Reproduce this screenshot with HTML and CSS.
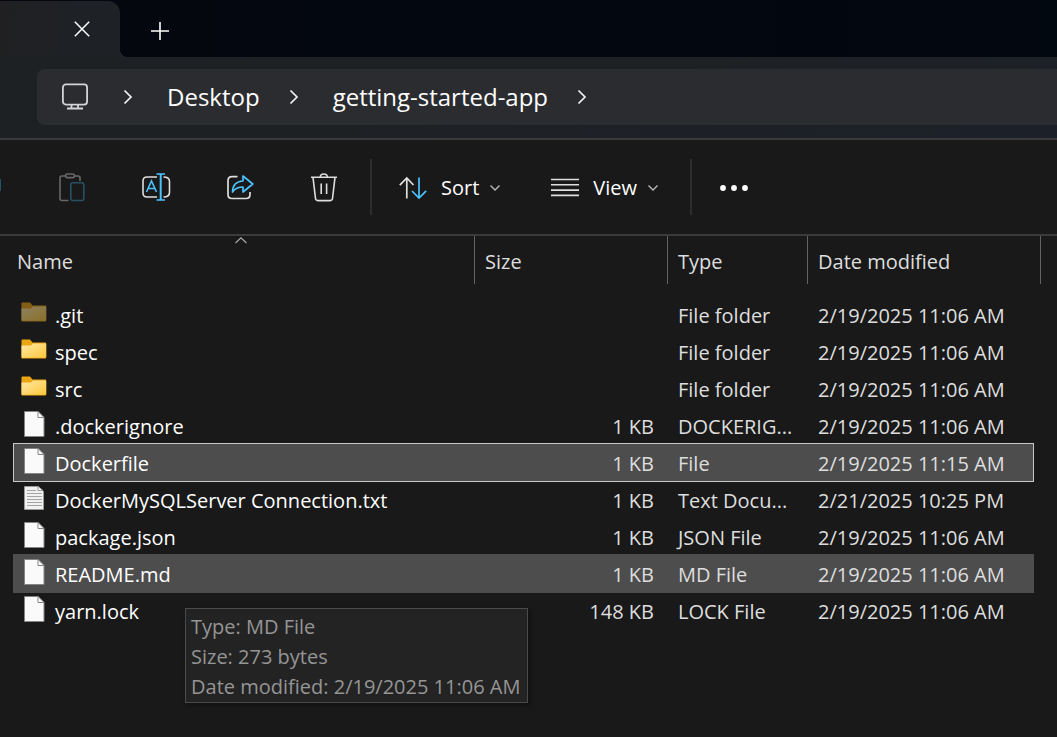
FILE: index.html
```html
<!DOCTYPE html>
<html lang="en">
<head>
<meta charset="utf-8">
<title>getting-started-app</title>
<link rel="stylesheet" href="styles.css">
</head>
<body>
<svg class="defs" aria-hidden="true">
  <defs>
    <linearGradient id="front" x1="0" y1="0" x2="1" y2="1"><stop offset="0" stop-color="#ffe8a6"/><stop offset="1" stop-color="#fdc73a"/></linearGradient>
    <symbol id="folder" viewBox="0.500 1 26 28">
      <path d="M1 5.500q0-1 1-1h7.500l2.500 3H25q.7 0 .7 1V22.500q0 1-1 1H1.500q-.5 0-.5-1z" fill="#eba512"/>
      <path d="M1 10.500h8.500q1 0 1.500-.6l1.500-1.400H25q.7 0 .7 1V22q0 .8-.8.8H1.600q-.6 0-.6-.8z" fill="url(#front)"/>
    </symbol>
    <symbol id="file" viewBox="0 0 26 28">
      <path d="M3.500 1.500H17L23 7.500V26.500H3.500z" fill="#fafafa" stroke="#858585"/>
      <path d="M17 1.500V7.500H23z" fill="#fff" stroke="#858585"/>
    </symbol>
    <symbol id="text" viewBox="0 0 26 28">
      <path d="M3.500 2.500H17L22.500 7.500V25.500H3.500z" fill="#f1f1f1" stroke="#999"/>
      <path d="M17 2.500V6.500H22z" fill="#fff" stroke="#999"/>
      <path d="M6 6.500H15M6 9.500H21M6 12.500H21M6 15.500H21M6 18.500H21M6 21.500H21" stroke="#a4a4a4" stroke-width="1"/>
    </symbol>
    <symbol id="right" viewBox="0 0 10 16"><path d="M1.500 1.500 8 8 1.500 14.500" fill="none" stroke="#f2f2f2" stroke-width="1.700"/></symbol>
    <symbol id="down" viewBox="0 0 12 8"><path d="M1.500 1.500 6 6 10.500 1.500" fill="none" stroke="#bdbdbd" stroke-width="1.300"/></symbol>
  </defs>
</svg>

<header class="titlebar">
  <div class="tab">
    <button class="icon-button" aria-label="Close tab">
      <svg width="16" height="16" viewBox="0 0 16 16"><path d="M.800.800 15.200 15.200M15.200.800.800 15.200" stroke="#fff" stroke-width="1.500"/></svg>
    </button>
  </div>
  <button class="icon-button new-tab" aria-label="New tab">
    <svg width="18" height="18" viewBox="0 0 18 18"><path d="M9 0V18M0 9H18" stroke="#fff" stroke-width="1.600"/></svg>
  </button>
</header>

<nav class="address" aria-label="Address">
  <div class="crumbs">
    <button class="icon-button device" aria-label="This PC">
      <svg width="28" height="28" viewBox="0 0 28 28" fill="none" stroke="#d2d4d6" stroke-width="1.800"><rect x="1.900" y="1.400" width="24.200" height="20.200" rx="3"/><path d="M10.500 21.500v4M17 21.500v4M6 25.500h16"/></svg>
    </button>
    <svg class="chevron" width="10" height="16"><use href="#right"/></svg>
    <a class="crumb" href="#">Desktop</a>
    <svg class="chevron" width="10" height="16"><use href="#right"/></svg>
    <a class="crumb" href="#">getting-started-app</a>
    <svg class="chevron" width="10" height="16"><use href="#right"/></svg>
  </div>
</nav>

<div class="toolbar" role="toolbar" aria-label="Commands">
  <button class="copy" aria-label="Copy"></button>
  <button class="tool" aria-label="Paste" disabled>
    <svg width="32" height="32" viewBox="0 0 32 32" fill="none" stroke-width="1.600"><path d="M12.500 28.500H6Q4 28.500 4 26.500V6Q4 4 6 4H9M19 4h3q2 0 2 2v3" stroke="#686868"/><rect x="9.500" y="2" width="9" height="3.600" rx="1.800" stroke="#686868"/><rect x="14.800" y="10.700" width="13" height="17.800" rx="2" stroke="#285064"/></svg>
  </button>
  <button class="tool" aria-label="Rename">
    <svg width="32" height="32" viewBox="0 0 32 32" fill="none" stroke-width="1.600"><path d="M17 5H7Q3 5 3 9v12q0 4 4 4h10M23.500 5Q29.500 5 29.500 9.500V20.500Q29.500 25 23.500 25" stroke="#dedede"/><path d="M6.500 20 11.500 9 16.500 20M8 16.500h7M16.500 2h8.500M16.500 28h8.500" stroke="#4cc2ff"/><path d="M20.700 2V28" stroke="#4cc2ff" stroke-width="2"/></svg>
  </button>
  <button class="tool" aria-label="Share">
    <svg width="32" height="32" viewBox="0 0 32 32" fill="none" stroke-width="1.700"><path d="M13.500 4.700H8Q4 4.700 4 8.700V22.500Q4 26.500 8 26.500H22Q26 26.500 26 22.500V20" stroke="#dedede"/><path d="M19 9V4L28.800 12 19 20V15Q12 15 8.500 20 8.800 9.500 19 9z" stroke="#4cc2ff" stroke-linejoin="round"/></svg>
  </button>
  <button class="tool" aria-label="Delete">
    <svg width="32" height="32" viewBox="0 0 32 32" fill="none" stroke="#dedede" stroke-width="1.600"><path d="M3 5.300H29M5 5.300 7.500 26.500Q7.800 28.600 9.800 28.600H22.200Q24.200 28.600 24.500 26.500L27 5.300M12.300 5Q12.300 2 15.800 2 19.300 2 19.300 5M13.200 11.500v10.500M18.600 11.500v10.500"/></svg>
  </button>
  <span class="divider"></span>
  <button class="menu">
    <svg width="28" height="24" viewBox="0 0 28 24" fill="none" stroke-width="1.700"><path d="M7.800 22.500V2M.800 9.200 7.800 2 14.500 9" stroke="#dedede"/><path d="M20 1.500V22M13 15 20 22 27.200 14.800" stroke="#4cc2ff"/></svg>
    Sort
    <svg class="caret" width="12" height="8"><use href="#down"/></svg>
  </button>
  <button class="menu">
    <svg width="28" height="24" viewBox="0 0 28 24"><path d="M0 3.500H28M0 8.800H28M0 14.100H28M0 19.400H28" stroke="#dedede" stroke-width="1.600"/></svg>
    View
    <svg class="caret" width="12" height="8"><use href="#down"/></svg>
  </button>
  <span class="divider"></span>
  <button class="icon-button more" aria-label="See more">
    <svg width="28" height="8" viewBox="0 0 28 8" fill="#fff"><circle cx="3" cy="4" r="2.900"/><circle cx="14" cy="4" r="2.900"/><circle cx="25" cy="4" r="2.900"/></svg>
  </button>
</div>

<main>
  <table class="files">
    <colgroup><col><col class="col-size"><col class="col-type"><col class="col-date"></colgroup>
    <thead>
      <tr>
        <th scope="col" aria-sort="ascending"><div class="head">Name<svg class="sort" width="12" height="7" viewBox="0 0 12 7"><path d="M.500 6 6 .800 11.500 6" fill="none" stroke="#a8a8a8" stroke-width="1.200"/></svg></div></th>
        <th scope="col"><div class="head">Size</div></th>
        <th scope="col"><div class="head">Type</div></th>
        <th scope="col"><div class="head last">Date modified</div></th>
      </tr>
    </thead>
    <tbody>
      <tr><td><div class="name"><svg class="icon hidden-item"><use href="#folder"/></svg>.git</div></td><td></td><td>File folder</td><td>2/19/2025 11:06 AM</td></tr>
      <tr><td><div class="name"><svg class="icon"><use href="#folder"/></svg>spec</div></td><td></td><td>File folder</td><td>2/19/2025 11:06 AM</td></tr>
      <tr><td><div class="name"><svg class="icon"><use href="#folder"/></svg>src</div></td><td></td><td>File folder</td><td>2/19/2025 11:06 AM</td></tr>
      <tr><td><div class="name"><svg class="icon"><use href="#file"/></svg>.dockerignore</div></td><td>1 KB</td><td>DOCKERIG...</td><td>2/19/2025 11:06 AM</td></tr>
      <tr class="selected"><td><div class="name"><svg class="icon"><use href="#file"/></svg>Dockerfile</div></td><td>1 KB</td><td>File</td><td>2/19/2025 11:15 AM</td></tr>
      <tr><td><div class="name"><svg class="icon"><use href="#text"/></svg>DockerMySQLServer Connection.txt</div></td><td>1 KB</td><td>Text Docu...</td><td>2/21/2025 10:25 PM</td></tr>
      <tr><td><div class="name"><svg class="icon"><use href="#file"/></svg>package.json</div></td><td>1 KB</td><td>JSON File</td><td>2/19/2025 11:06 AM</td></tr>
      <tr class="hovered"><td><div class="name"><svg class="icon"><use href="#file"/></svg>README.md
        <div class="tooltip" role="tooltip"><div>Type: MD File</div><div>Size: 273 bytes</div><div>Date modified: 2/19/2025 11:06 AM</div></div></div></td><td>1 KB</td><td>MD File</td><td>2/19/2025 11:06 AM</td></tr>
      <tr><td><div class="name"><svg class="icon"><use href="#file"/></svg>yarn.lock</div></td><td>148 KB</td><td>LOCK File</td><td>2/19/2025 11:06 AM</td></tr>
    </tbody>
  </table>
</main>
</body>
</html>
```
FILE: styles.css
```css
* { box-sizing: border-box; }
body {
  margin: 0;
  min-height: 100vh;
  background: #191919;
  color: #fff;
  font: 20px/30px "Open Sans", "Noto Sans", sans-serif;
  overflow-x: hidden;
}
svg { display: block; flex: none; }
.defs { position: absolute; width: 0; height: 0; }
button {
  border: 0;
  padding: 0;
  background: none;
  color: inherit;
  font: inherit;
}
.icon-button { display: flex; align-items: center; justify-content: center; }

.titlebar {
  display: flex;
  height: 57px;
  background: linear-gradient(90deg, #05070f, #020810);
}
.tab {
  position: relative;
  display: flex;
  justify-content: flex-end;
  align-items: center;
  width: 120px;
  margin-top: 1px;
  padding: 0 30px 1px 0;
  border-radius: 0 12px 0 0;
  background: linear-gradient(100deg, #202022, #1e2125 60%);
}
.tab::after {
  content: "";
  position: absolute;
  left: 100%;
  bottom: 0;
  width: 8px;
  height: 8px;
  background: radial-gradient(circle at 100% 0, transparent 8px, #1e2125 8px);
}
.new-tab { margin-left: 31px; padding-top: 4px; }

.address {
  padding: 12px 0 13px 37px;
  background: linear-gradient(170deg, #1e2124 50%, #1c2029);
  border-bottom: 2px solid #3b3b3b;
}
.crumbs {
  display: flex;
  align-items: center;
  height: 56px;
  padding-left: 24px;
  border-radius: 8px 0 0 8px;
  background: #2a2c30;
}
.device { margin-right: 5px; }
.chevron { margin: 0 34px 0 29px; }
.crumb { color: #fff; font-size: 24px; text-decoration: none; }

.toolbar {
  display: flex;
  align-items: center;
  height: 96px;
  border-bottom: 2px solid #3b3b3b;
}
.copy { width: 1px; height: 12px; margin: 0 29px 4px 0; background: #24506a; }
.tool { display: flex; justify-content: center; width: 84px; padding-top: 2px; }
.divider { width: 2px; height: 56px; background: #2c2c2c; }
.tool + .divider { margin-left: 4px; }
.menu { display: flex; align-items: center; gap: 14px; margin-left: 27px; padding-top: 2px; }
.menu + .menu { margin-left: 50px; }
.menu + .divider { margin-left: 31px; }
.caret { margin-left: -4px; }
.more { margin-left: 28px; padding-top: 1px; }

.files {
  width: calc(100% - 38px);
  margin: 0 24px 0 14px;
  table-layout: fixed;
  border-collapse: collapse;
}
.col-size { width: 193px; }
.col-type { width: 140px; }
.col-date { width: 225px; }
th { padding: 0 0 12px; font-weight: 400; text-align: left; }
.head {
  position: relative;
  display: flex;
  align-items: center;
  height: 48px;
  padding: 4px 0 0 10px;
  border-right: 1px solid #636363;
  color: #dedede;
}
th:first-child .head { padding-left: 3px; }
.head.last { margin-right: -8px; }
.sort { position: absolute; top: 1px; left: 48%; }
td {
  height: 37px;
  padding: 2px 14px 0 10px;
  color: #dedede;
  line-height: 35px;
  white-space: nowrap;
}
td:first-child { padding-left: 7px; color: #fff; }
td:nth-child(2) { text-align: right; }
td:last-child { padding-right: 0; }
.name { position: relative; display: flex; align-items: center; gap: 8px; height: 35px; }
.icon { width: 26px; height: 28px; margin-bottom: 6px; }
.hidden-item { opacity: .5; }
.selected { background: #4d4d4d; outline: 1px solid #c8c8c8; }
.hovered { background: #4d4d4d; outline: 1px solid #4d4d4d; }
.tooltip {
  position: absolute;
  top: 51px;
  left: 164px;
  z-index: 1;
  padding: 3px 7px 0 5px;
  border: 1px solid #4b4b4b;
  background: #232323;
  box-shadow: 2px 2px 4px rgba(0, 0, 0, .4);
  color: #959595;
  line-height: 30px;
}
```
